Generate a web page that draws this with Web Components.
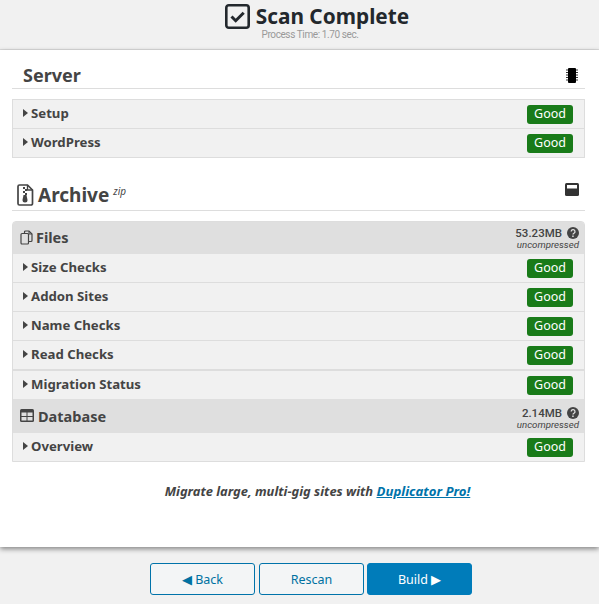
<!DOCTYPE html>
<html>
<head>
<meta charset="utf-8">
<title>Scan Complete</title>
<style>
  html, body { margin: 0; padding: 0; height: 604px; overflow: hidden; background: #f1f1f1; }
  body { font-family: "Noto Sans", "Open Sans", sans-serif; color: #444; }
</style>
</head>
<body>
<scan-header></scan-header>
<scan-panel>
  <section-head style="height:26px;padding-top:12px">
    <span style="padding-left:11px">Server</span>
    <svg slot="icon" width="14" height="15" viewBox="0 0 14 15"><rect x="3" y="0" width="8" height="15" rx="1" fill="#000"/><path d="M1 2h2M1 4.500h2M1 7h2M1 9.500h2M1 12h2M11 2h2M11 4.500h2M11 7h2M11 9.500h2M11 12h2" stroke="#333" stroke-width="1"/></svg>
  </section-head>
  <check-box style="margin-top:10px">
    <check-row>Setup</check-row>
    <check-row last>WordPress</check-row>
  </check-box>
  <section-head style="height:31px;margin-top:21px" archive>
    <svg width="17" height="22" viewBox="0 0 17 22" style="margin:0 4px 0 5px"><path d="M2.500 1h8l5 5v13.500a1.500 1.500 0 0 1-1.500 1.500H2.500A1.500 1.500 0 0 1 1 19.500v-17A1.500 1.500 0 0 1 2.500 1z" fill="none" stroke="#444" stroke-width="1.700"/><path d="M10.500 1v5h5" fill="none" stroke="#444" stroke-width="1.300"/><path d="M6 3h2v2H6zM8 5h2v2H8zM6 7h2v2H6zM8 9h2v2H8z" fill="#444"/><path d="M6.500 11h3l1 5a2.500 2.500 0 1 1-5 0z" fill="#444"/></svg>
    <span>Archive</span><i class="zip">zip</i>
    <svg slot="icon" width="14" height="13" viewBox="0 0 14 13" style="margin-bottom:10px"><rect width="14" height="13" rx="1.500" fill="#333"/><rect x="2" y="2" width="10" height="3.500" fill="#fff"/></svg>
  </section-head>
  <check-box style="margin-top:10px" rounded>
    <group-head size="53.23MB">
      <svg width="13" height="15" viewBox="0 0 13 15"><path d="M4.500 3.500V2a1 1 0 0 1 1-1H9l3 3v6.500a1 1 0 0 1-1 1H8.500" fill="none" stroke="#444" stroke-width="1.200"/><rect x="1" y="3.500" width="7.500" height="10.500" rx="1" fill="none" stroke="#444" stroke-width="1.200"/><path d="M9 1v3h3" fill="none" stroke="#444" stroke-width="1"/></svg>
      <span>Files</span>
    </group-head>
    <check-row>Size Checks</check-row>
    <check-row>Addon Sites</check-row>
    <check-row>Name Checks</check-row>
    <check-row thick>Read Checks</check-row>
    <check-row plain>Migration Status</check-row>
    <group-head size="2.14MB" tall>
      <svg width="14" height="13" viewBox="0 0 14 13"><rect x="0" y="0" width="14" height="13" rx="1.500" fill="#444"/><path d="M1.500 3.500h5v3.500h-5zM7.500 3.500h5v3.500h-5zM1.500 8h5v3.500h-5zM7.500 8h5v3.500h-5z" fill="#dfdfdf"/></svg>
      <span>Database</span>
    </group-head>
    <check-row plain last>Overview</check-row>
  </check-box>
  <promo-line>Migrate large, multi-gig sites with <a href="#pro">Duplicator Pro!</a></promo-line>
</scan-panel>
<scan-footer></scan-footer>

<script>
class ScanHeader extends HTMLElement {
  connectedCallback() {
    this.attachShadow({ mode: 'open' });
    this.shadowRoot.innerHTML = `
      <style>
        :host { display: block; height: 49px; background: #f1f1f1; border-bottom: 1px solid #ddd; text-align: center; }
        .title { display: flex; justify-content: center; align-items: center; gap: 6px; height: 30px; padding: 1px 0 0 35px; color: #23282d; font-size: 20.800px; font-weight: 700; line-height: 30px; }
        .sub { font: 400 10px/12px Roboto, sans-serif; letter-spacing: -.4px; color: #999; padding-left: 21px; margin-top: -2px; }
      </style>
      <div class="title">
        <svg width="25" height="25" viewBox="0 0 25 25"><rect x="1.300" y="1.300" width="22.400" height="22.400" rx="2.500" fill="none" stroke="#23282d" stroke-width="2.600"/><path d="M6.500 12.500l4.200 4.200 8-8" fill="none" stroke="#23282d" stroke-width="3"/></svg>
        <span>Scan Complete</span>
      </div>
      <div class="sub">Process Time: 1.70 sec.</div>
    `;
  }
}

class ScanPanel extends HTMLElement {
  connectedCallback() {
    this.attachShadow({ mode: 'open' });
    this.shadowRoot.innerHTML = `
      <style>
        :host { display: block; height: 497px; box-sizing: border-box; background: #fff; padding: 0 14px 0 12px; box-shadow: 0 2px 5px rgba(0,0,0,.45); position: relative; }
      </style>
      <slot></slot>
    `;
  }
}

class SectionHead extends HTMLElement {
  connectedCallback() {
    this.attachShadow({ mode: 'open' });
    this.shadowRoot.innerHTML = `
      <style>
        :host { display: flex; align-items: center; border-bottom: 1px solid #ddd; font-size: 18px; font-weight: 700; color: #444; }
        :host([archive]) { font-size: 19px; }
        .main { display: flex; align-items: center; flex: 1; }
        .end { display: flex; margin-right: 6px; }
        ::slotted(.zip) { font-size: 10px; font-weight: 400; align-self: flex-start; margin: 2px 0 0 4px; }
      </style>
      <div class="main"><slot></slot></div>
      <div class="end"><slot name="icon"></slot></div>
    `;
  }
}

class CheckBox extends HTMLElement {
  connectedCallback() {
    this.attachShadow({ mode: 'open' });
    this.shadowRoot.innerHTML = `
      <style>
        :host { display: block; border: 1px solid #ddd; background: #f1f1f1; }
        :host([rounded]) { border-radius: 4px 4px 0 0; overflow: hidden; }
      </style>
      <slot></slot>
    `;
  }
}

class CheckRow extends HTMLElement {
  connectedCallback() {
    this.attachShadow({ mode: 'open' });
    this.shadowRoot.innerHTML = `
      <style>
        :host { display: flex; align-items: center; height: 28px; padding: 0 11px 0 10px; border-bottom: 1px solid #ddd; font-size: 13.200px; font-weight: 700; color: #444; }
        :host([last]) { height: 28px; border-bottom: 0; }
        :host([thick]) { border-bottom-width: 2px; }
        :host([plain]) { border-bottom: 0; }
        .tri { width: 0; height: 0; border-left: 5px solid #444; border-top: 4.500px solid transparent; border-bottom: 4.500px solid transparent; margin: -2px 3px 0 0; }
        .name { flex: 1; margin-top: -2px; }
        .badge { width: 46px; height: 19px; line-height: 18px; background: #197b19; color: #fff; font-size: 12.500px; font-weight: 400; border-radius: 3px; text-align: center; }
      </style>
      <span class="tri"></span>
      <span class="name"><slot></slot></span>
      <span class="badge">Good</span>
    `;
  }
}

class GroupHead extends HTMLElement {
  connectedCallback() {
    const size = this.getAttribute('size');
    this.attachShadow({ mode: 'open' });
    this.shadowRoot.innerHTML = `
      <style>
        :host { display: flex; align-items: center; height: 32px; padding: 0 5px 0 7px; background: #dfdfdf; font-size: 14.500px; font-weight: 700; color: #444; }
        :host([tall]) { height: 34px; }
        .lbl { display: flex; align-items: center; gap: 3px; flex: 1; margin-top: -2px; }
        :host([tall]) .lbl { margin-top: -1px; gap: 4px; }
        .info { text-align: right; padding-top: 1px; font-family: Roboto, sans-serif; }
        :host([tall]) .info { padding-top: 4px; }
        .size { display: flex; align-items: center; justify-content: flex-end; gap: 5px; font-size: 11.500px; font-weight: 500; line-height: 12px; height: 12px; }
        .unc { font-size: 9.700px; font-style: italic; font-weight: 400; line-height: 11px; }
      </style>
      <div class="lbl"><slot></slot></div>
      <div class="info">
        <div class="size">${size}
          <svg width="12" height="12" viewBox="0 0 12 12"><circle cx="6" cy="6" r="6" fill="#444"/><path d="M4.200 4.600a1.900 1.900 0 1 1 2.800 1.600c-.7.4-1 .7-1 1.300" fill="none" stroke="#dfdfdf" stroke-width="1.300"/><rect x="5.200" y="8.500" width="1.500" height="1.500" fill="#dfdfdf"/></svg>
        </div>
        <div class="unc">uncompressed</div>
      </div>
    `;
  }
}

class PromoLine extends HTMLElement {
  connectedCallback() {
    this.attachShadow({ mode: 'open' });
    this.shadowRoot.innerHTML = `
      <style>
        :host { display: block; margin-top: 20px; text-align: center; font-size: 12.900px; font-style: italic; font-weight: 700; color: #444; line-height: 18px; padding-left: 38px; }
        ::slotted(a) { color: #0073aa; text-decoration: underline; font-size: 13.200px; }
      </style>
      <slot></slot>
    `;
  }
}

class ScanFooter extends HTMLElement {
  connectedCallback() {
    this.attachShadow({ mode: 'open' });
    this.shadowRoot.innerHTML = `
      <style>
        :host { display: flex; justify-content: center; gap: 4px; padding: 16px 0 0 23px; }
        .btn { box-sizing: border-box; width: 105px; height: 32px; display: flex; align-items: center; justify-content: center; border: 1px solid #0073aa; border-radius: 3px; background: #f3f5f6; color: #0071a1; font: 400 12.500px "Noto Sans", sans-serif; padding: 0; }
        .primary { background: #007cba; color: #fff; border-color: #007cba; margin-left: -1px; }
      </style>
      <button class="btn">◀ Back</button>
      <button class="btn">Rescan</button>
      <button class="btn primary">Build ▶</button>
    `;
  }
}

customElements.define('scan-header', ScanHeader);
customElements.define('scan-panel', ScanPanel);
customElements.define('section-head', SectionHead);
customElements.define('check-box', CheckBox);
customElements.define('check-row', CheckRow);
customElements.define('group-head', GroupHead);
customElements.define('promo-line', PromoLine);
customElements.define('scan-footer', ScanFooter);
</script>
</body>
</html>
